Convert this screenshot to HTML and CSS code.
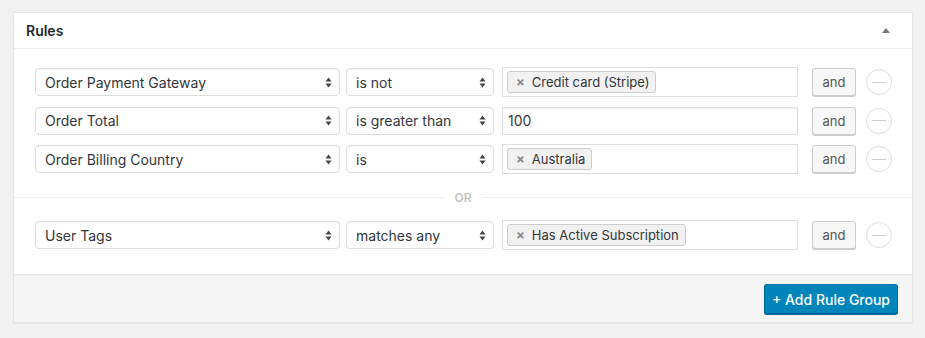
FILE: index.html
```html
<!DOCTYPE html>
<html>
<head>
<meta charset="utf-8">
<link rel="stylesheet" href="styles.css">
</head>
<body>
<div class="panel">
  <div class="panel-header">
    <h2 class="panel-title">Rules</h2>
    <svg class="toggle" width="8" height="5" viewBox="0 0 8 5"><polygon points="0,5 4,0 8,5" fill="#72777c"/></svg>
  </div>
  <div class="group">
    <div class="rule">
      <div class="select field-wide"><span>Order Payment Gateway</span><svg class="arrows" width="7" height="11" viewBox="0 0 7 11"><polygon points="0.5,4.5 3.5,0.5 6.5,4.5"/><polygon points="0.5,6.5 3.5,10.5 6.5,6.5"/></svg></div>
      <div class="select field-op"><span>is not</span><svg class="arrows" width="7" height="11" viewBox="0 0 7 11"><polygon points="0.5,4.5 3.5,0.5 6.5,4.5"/><polygon points="0.5,6.5 3.5,10.5 6.5,6.5"/></svg></div>
      <div class="tags field-value"><span class="tag"><span class="tag-x">×</span>Credit card (Stripe)</span></div>
      <button class="btn-and">and</button>
      <span class="btn-remove"></span>
    </div>
    <div class="rule">
      <div class="select field-wide"><span>Order Total</span><svg class="arrows" width="7" height="11" viewBox="0 0 7 11"><polygon points="0.5,4.5 3.5,0.5 6.5,4.5"/><polygon points="0.5,6.5 3.5,10.5 6.5,6.5"/></svg></div>
      <div class="select field-op"><span>is greater than</span><svg class="arrows" width="7" height="11" viewBox="0 0 7 11"><polygon points="0.5,4.5 3.5,0.5 6.5,4.5"/><polygon points="0.5,6.5 3.5,10.5 6.5,6.5"/></svg></div>
      <div class="text-input field-value">100</div>
      <button class="btn-and">and</button>
      <span class="btn-remove"></span>
    </div>
    <div class="rule">
      <div class="select field-wide"><span>Order Billing Country</span><svg class="arrows" width="7" height="11" viewBox="0 0 7 11"><polygon points="0.5,4.5 3.5,0.5 6.5,4.5"/><polygon points="0.5,6.5 3.5,10.5 6.5,6.5"/></svg></div>
      <div class="select field-op"><span>is</span><svg class="arrows" width="7" height="11" viewBox="0 0 7 11"><polygon points="0.5,4.5 3.5,0.5 6.5,4.5"/><polygon points="0.5,6.5 3.5,10.5 6.5,6.5"/></svg></div>
      <div class="tags field-value"><span class="tag"><span class="tag-x">×</span>Australia</span></div>
      <button class="btn-and">and</button>
      <span class="btn-remove"></span>
    </div>
  </div>
  <div class="or-divider"><span>OR</span></div>
  <div class="group group-second">
    <div class="rule">
      <div class="select field-wide"><span>User Tags</span><svg class="arrows" width="7" height="11" viewBox="0 0 7 11"><polygon points="0.5,4.5 3.5,0.5 6.5,4.5"/><polygon points="0.5,6.5 3.5,10.5 6.5,6.5"/></svg></div>
      <div class="select field-op"><span>matches any</span><svg class="arrows" width="7" height="11" viewBox="0 0 7 11"><polygon points="0.5,4.5 3.5,0.5 6.5,4.5"/><polygon points="0.5,6.5 3.5,10.5 6.5,6.5"/></svg></div>
      <div class="tags field-value"><span class="tag"><span class="tag-x">×</span>Has Active Subscription</span></div>
      <button class="btn-and">and</button>
      <span class="btn-remove"></span>
    </div>
  </div>
  <div class="panel-footer">
    <button class="btn-primary">+ Add Rule Group</button>
  </div>
</div>
</body>
</html>
```

FILE: styles.css
```css
html, body {
  margin: 0;
  padding: 0;
}
body {
  background: #f1f1f1;
  font-family: Inter, "Liberation Sans", Arial, sans-serif;
  color: #32373c;
  padding: 12px 13px;
}
.panel {
  width: 900px;
  box-sizing: border-box;
  background: #fff;
  border: 1px solid #e5e5e5;
  box-shadow: 0 1px 1px rgba(0,0,0,0.04);
}
.panel-header {
  height: 35px;
  border-bottom: 1px solid #eee;
  display: flex;
  align-items: center;
  justify-content: space-between;
  padding: 0 22px 0 12px;
}
.panel-title {
  margin: 0;
  font-size: 14px;
  font-weight: 600;
  color: #23282d;
}
.toggle {
  display: block;
}
.group {
  padding: 18px 19px 23px 21px;
  display: flex;
  flex-direction: column;
  gap: 8.5px;
}
.group-second {
  padding-top: 22px;
  padding-bottom: 24px;
}
.rule {
  display: flex;
  align-items: center;
  height: 30px;
}
.select {
  box-sizing: border-box;
  height: 28px;
  border: 1px solid #ddd;
  border-radius: 4px;
  background: #fff;
  box-shadow: inset 0 1px 2px rgba(0,0,0,0.04);
  display: flex;
  align-items: center;
  justify-content: space-between;
  padding: 0 7px 0 9px;
  font-size: 14px;
  color: #32373c;
}
.arrows {
  fill: #444;
  display: block;
}
.field-wide {
  width: 305px;
  margin-right: 6px;
}
.field-op {
  width: 148px;
  margin-right: 8px;
}
.field-value {
  width: 296px;
  box-sizing: border-box;
}
.tags {
  height: 30px;
  border: 1px solid #ddd;
  padding: 3px 4px;
  display: flex;
  align-items: flex-start;
}
.tag {
  box-sizing: border-box;
  height: 22px;
  display: inline-flex;
  align-items: center;
  padding: 0 6px 0 8px;
  border: 1px solid #ccc;
  border-radius: 3px;
  background: #f1f1f1;
  font-size: 13px;
  color: #32373c;
}
.tag-x {
  color: #888;
  font-weight: 700;
  font-size: 13px;
  margin-right: 7px;
}
.text-input {
  height: 28px;
  border: 1px solid #ddd;
  box-shadow: inset 0 1px 2px rgba(0,0,0,0.07);
  display: flex;
  align-items: center;
  padding: 0 5px;
  font-size: 14px;
  color: #32373c;
}
.btn-and {
  margin-left: 14px;
  width: 44px;
  height: 28px;
  box-sizing: border-box;
  border: 1px solid #ccc;
  border-radius: 3px;
  background: #f7f7f7;
  box-shadow: 0 1px 0 #ccc;
  color: #555;
  font-family: inherit;
  font-size: 13px;
  padding: 0;
}
.btn-remove {
  margin-left: 10px;
  width: 26px;
  height: 26px;
  box-sizing: border-box;
  border: 1px solid #ddd;
  border-radius: 50%;
  display: flex;
  align-items: center;
  justify-content: center;
}
.btn-remove::before {
  content: "";
  width: 14px;
  height: 1px;
  background: #ccc;
}
.or-divider {
  display: flex;
  align-items: center;
  height: 1px;
  gap: 10px;
}
.or-divider::before,
.or-divider::after {
  content: "";
  flex: 1;
  height: 1px;
  background: #eee;
}
.or-divider span {
  font-size: 12px;
  font-weight: 600;
  color: #c4c4c4;
  line-height: 1;
}
.panel-footer {
  border-top: 1px solid #e5e5e5;
  background: #f5f5f5;
  padding: 9px 14px 8px 0;
  display: flex;
  justify-content: flex-end;
}
.btn-primary {
  height: 30px;
  box-sizing: border-box;
  padding: 0;
  width: 134px;
  white-space: nowrap;
  border: 1px solid #0073aa;
  border-color: #0073aa #006799 #006799;
  border-radius: 3px;
  background: #0085ba;
  box-shadow: 0 1px 0 #006799;
  color: #fff;
  font-family: inherit;
  font-size: 14px;
  font-weight: 500;
}
```
